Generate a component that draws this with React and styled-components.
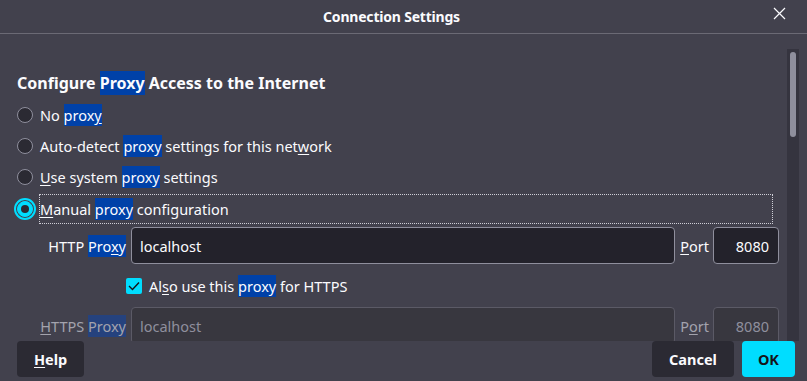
import React from 'react';
import styled, { createGlobalStyle } from 'styled-components';

const GlobalStyle = createGlobalStyle`
  html, body {
    margin: 0;
    padding: 0;
    background: #42414d;
  }
  body {
    font-family: "Noto Sans", "Open Sans", sans-serif;
    color: #fbfbfe;
  }
`;

const Dialog = styled.div`
  width: 807px;
  height: 381px;
  display: flex;
  flex-direction: column;
  background: #42414d;
  overflow: hidden;
`;

const TitleBar = styled.div`
  height: 33px;
  flex: none;
  display: flex;
  align-items: center;
  justify-content: center;
  position: relative;
  border-bottom: 1px solid #6b6a75;
  padding-right: 24px;
  font-size: 14px;
  font-weight: 700;
  letter-spacing: -0.2px;
`;

const CloseButton = styled.div`
  position: absolute;
  right: 21px;
  top: 7px;
  width: 13px;
  height: 13px;
  display: flex;
`;

const Body = styled.div`
  flex: 1;
  display: flex;
  min-height: 0;
  padding-right: 8px;
`;

const Scroller = styled.div`
  flex: 1;
  overflow: hidden;
  padding: 38px 8px 0 17px;
`;

const Track = styled.div`
  width: 12px;
  flex: none;
  background: #35343f;
  display: flex;
  justify-content: center;
  padding-top: 3px;
  margin-top: 15px;
`;

const Thumb = styled.div`
  width: 6px;
  height: 85px;
  border-radius: 3px;
  background: #8f8f9d;
`;

const Heading = styled.h2`
  margin: 0 0 5px;
  font-size: 16px;
  font-weight: 700;
  line-height: 22px;
`;

const Hl = styled.span`
  background: ${({ muted }) => (muted ? '#25427e' : '#0041a8')};
  color: ${({ muted }) => (muted ? '#a3a3ad' : '#fbfbfe')};
  padding: 1px 0;
`;

const Key = styled.span`
  text-decoration: underline;
  text-underline-offset: 2px;
`;

const RadioRow = styled.div`
  display: flex;
  align-items: center;
  gap: 7px;
  height: ${({ tall }) => (tall ? '30px' : '31px')};
  margin-top: ${({ tall }) => (tall ? '2px' : '0')};
  font-size: 14.5px;
`;

const Radio = styled.span`
  width: 16px;
  height: 16px;
  box-sizing: border-box;
  border-radius: 50%;
  flex: none;
  display: flex;
  align-items: center;
  justify-content: center;
  background: ${({ checked }) => (checked ? '#00ddff' : '#2b2a33')};
  border: 1px solid ${({ checked }) => (checked ? '#00ddff' : '#8f8f9d')};
  outline: ${({ checked }) => (checked ? '2px solid #00ddff' : 'none')};
  outline-offset: 1px;
  &::after {
    content: '';
    display: ${({ checked }) => (checked ? 'block' : 'none')};
    width: 8px;
    height: 8px;
    border-radius: 50%;
    background: #2b2a33;
  }
`;

const FocusLabel = styled.span`
  flex: 1;
  height: 28px;
  display: flex;
  align-items: center;
  margin-left: -1px;
  border: 1px dotted #cfcfd8;
  margin-right: 6px;
`;

const ProxyGrid = styled.div`
  display: grid;
  grid-template-columns: 109px 1fr auto 66px;
  column-gap: 5px;
  margin-top: 3px;
  font-size: 14.5px;
`;

const FieldLabel = styled.span`
  display: flex;
  align-items: center;
  justify-content: flex-end;
  height: 37px;
  color: ${({ disabled }) => (disabled ? '#a3a3ad' : '#fbfbfe')};
  margin-right: ${({ port }) => (port ? '-1px' : '0')};
`;

const Field = styled.div`
  height: 37px;
  box-sizing: border-box;
  border: 1px solid ${({ disabled }) => (disabled ? '#5b5a66' : '#8f8f9d')};
  border-radius: 4px;
  background: ${({ disabled }) => (disabled ? '#38373f' : '#23222b')};
  color: ${({ disabled }) => (disabled ? '#8f8f9d' : '#fbfbfe')};
  display: flex;
  align-items: center;
  justify-content: ${({ right }) => (right ? 'flex-end' : 'flex-start')};
  padding: 0 9px 0 8px;
`;

const CheckRow = styled.div`
  grid-column: 2 / span 3;
  height: 43px;
  display: flex;
  align-items: center;
  gap: 7px;
  margin-left: -5px;
`;

const Checkbox = styled.span`
  width: 16px;
  height: 16px;
  border-radius: 2px;
  background: #00ddff;
  display: flex;
  align-items: center;
  justify-content: center;
  flex: none;
`;

const Footer = styled.div`
  height: 40px;
  flex: none;
  display: flex;
  align-items: flex-start;
  padding: 0 12px 0 17px;
  gap: 8px;
`;

const Button = styled.button`
  height: 36px;
  border: none;
  border-radius: 4px;
  padding: 0 ${({ wide }) => (wide ? 17 : 16)}px;
  font-family: inherit;
  font-size: 14.5px;
  font-weight: 700;
  background: ${({ primary }) => (primary ? '#00ddff' : '#2b2a33')};
  color: ${({ primary }) => (primary ? '#15141a' : '#fbfbfe')};
  margin-left: ${({ push }) => (push ? 'auto' : '0')};
`;

export default function App() {
  return (
    <Dialog>
      <GlobalStyle />
      <TitleBar>
        Connection Settings
        <CloseButton>
          <svg width="13" height="13" viewBox="0 0 13 13">
            <path d="M1 1L12 12M12 1L1 12" stroke="#fbfbfe" strokeWidth="1.2" />
          </svg>
        </CloseButton>
      </TitleBar>
      <Body>
        <Scroller>
          <Heading>
            Configure <Hl>Proxy</Hl> Access to the Internet
          </Heading>
          <RadioRow>
            <Radio />
            <span>
              No <Hl>prox<Key>y</Key></Hl>
            </span>
          </RadioRow>
          <RadioRow>
            <Radio />
            <span>
              Auto-detect <Hl>proxy</Hl> settings for this net<Key>w</Key>ork
            </span>
          </RadioRow>
          <RadioRow>
            <Radio />
            <span>
              <Key>U</Key>se system <Hl>proxy</Hl> settings
            </span>
          </RadioRow>
          <RadioRow tall>
            <Radio checked />
            <FocusLabel>
              <Key>M</Key>anual&nbsp;<Hl>proxy</Hl>&nbsp;configuration
            </FocusLabel>
          </RadioRow>
          <ProxyGrid>
            <FieldLabel>
              HTTP&nbsp;<Hl>Pro<Key>x</Key>y</Hl>
            </FieldLabel>
            <Field>localhost</Field>
            <FieldLabel port>
              <Key>P</Key>ort
            </FieldLabel>
            <Field right>8080</Field>

            <CheckRow>
              <Checkbox>
                <svg width="12" height="10" viewBox="0 0 12 10">
                  <path d="M1 5L4.5 8.5L11 1.5" stroke="#15141a" strokeWidth="1.4" fill="none" />
                </svg>
              </Checkbox>
              <span>
                Al<Key>s</Key>o use this <Hl>proxy</Hl> for HTTPS
              </span>
            </CheckRow>

            <FieldLabel disabled>
              <Key>H</Key>TTPS&nbsp;<Hl muted>Proxy</Hl>
            </FieldLabel>
            <Field disabled>localhost</Field>
            <FieldLabel disabled port>
              P<Key>o</Key>rt
            </FieldLabel>
            <Field disabled right>8080</Field>
          </ProxyGrid>
        </Scroller>
        <Track>
          <Thumb />
        </Track>
      </Body>
      <Footer>
        <Button wide>
          <Key>H</Key>elp
        </Button>
        <Button push wide>Cancel</Button>
        <Button primary>OK</Button>
      </Footer>
    </Dialog>
  );
}
